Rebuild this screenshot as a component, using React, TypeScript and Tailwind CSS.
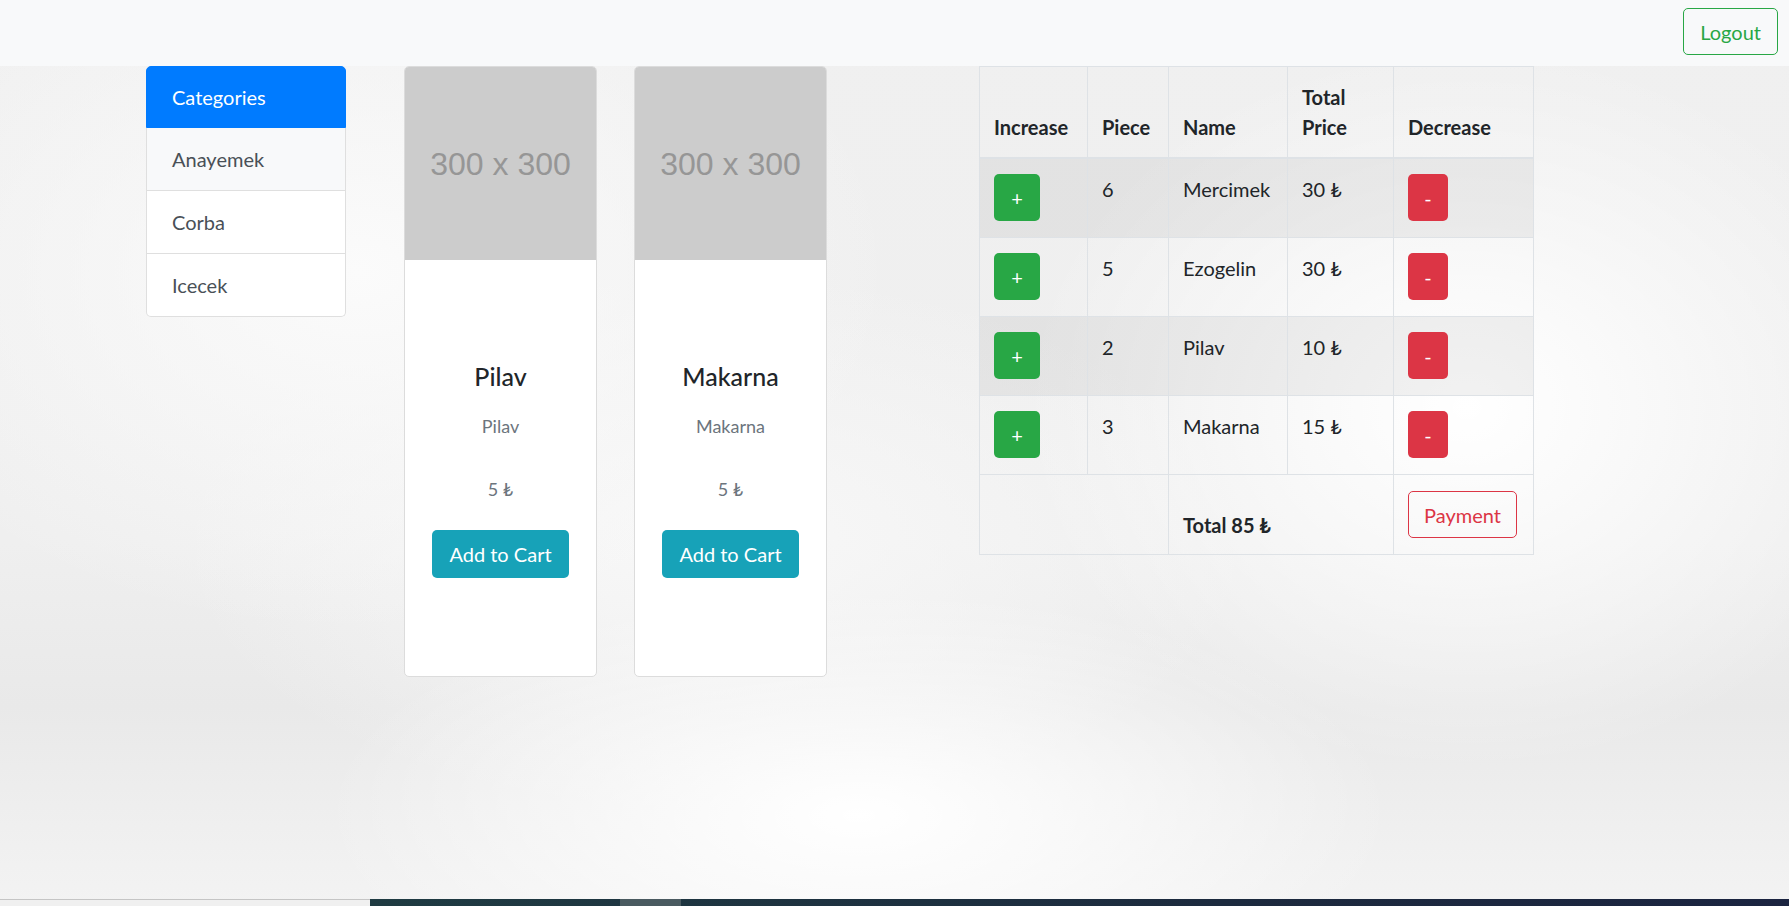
import React from "react";

const categories = ["Anayemek", "Corba", "Icecek"];

const products = [
  { name: "Pilav", desc: "Pilav", price: 5 },
  { name: "Makarna", desc: "Makarna", price: 5 },
];

const cart = [
  { piece: 6, name: "Mercimek", total: 30 },
  { piece: 5, name: "Ezogelin", total: 30 },
  { piece: 2, name: "Pilav", total: 10 },
  { piece: 3, name: "Makarna", total: 15 },
];

function ProductCard({ name, desc, price }: { name: string; desc: string; price: number }) {
  return (
    <div className="flex h-[611px] w-[193px] flex-col overflow-hidden rounded-[5px] border border-[#dcdcdc] bg-white">
      <div className="flex h-[193px] items-center justify-center bg-[#cccccc] font-['Liberation_Sans',Arial,sans-serif] text-[32px] text-[#969696]">
        300 x 300
      </div>
      <div className="flex flex-1 flex-col items-center justify-center pt-[2px]">
        <h5 className="text-[25px] font-medium leading-[30px] text-[#212529]">{name}</h5>
        <p className="mt-[22px] text-[18px] leading-[27px] text-[#6c757d]">{desc}</p>
        <p className="mt-[36px] text-[18px] leading-[27px] text-[#6c757d]">{price} ₺</p>
        <button className="mt-[27px] h-[48px] rounded-[5px] bg-[#17a2b8] px-[17px] text-[20px] text-white">
          Add to Cart
        </button>
      </div>
    </div>
  );
}

export default function App() {
  return (
    <div className="flex h-screen flex-col overflow-hidden font-['Lato','Noto_Sans',sans-serif] text-[#212529] bg-[radial-gradient(ellipse_30%_25%_at_48%_90%,#ffffff_0%,rgba(255,255,255,0)_100%),radial-gradient(ellipse_25%_40%_at_82%_45%,#ffffff_0%,rgba(255,255,255,0)_100%),radial-gradient(ellipse_30%_40%_at_20%_30%,#fbfbfb_0%,rgba(255,255,255,0)_100%),radial-gradient(ellipse_30%_30%_at_40%_60%,#f8f8f8_0%,rgba(255,255,255,0)_100%),linear-gradient(180deg,#f0f0f0_0%,#efefef_60%,#e9e9e9_78%,#f3f3f3_100%)]">
      {/* navbar */}
      <nav className="flex h-[66px] shrink-0 items-start justify-end bg-[#f8f9fa] pr-[11px] pt-[8px]">
        <button className="h-[47px] rounded-[5px] border border-[#28a745] px-[16px] text-[20px] text-[#28a745]">
          Logout
        </button>
      </nav>

      <main className="flex flex-1 items-start pl-[146px]">
        {/* categories */}
        <ul className="w-[200px] text-[20px]">
          <li className="flex h-[62px] items-center rounded-t-[5px] border border-[#007bff] bg-[#007bff] px-[25px] text-white">
            Categories
          </li>
          {categories.map((c, i) => (
            <li
              key={c}
              className={
                "flex h-[63px] items-center border-x border-b border-[#dfdfdf] px-[25px] text-[#495057] " +
                (i === 0 ? "bg-[#f8f9fa]" : "bg-white") +
                (i === categories.length - 1 ? " rounded-b-[5px]" : "")
              }
            >
              {c}
            </li>
          ))}
        </ul>

        {/* products */}
        <div className="ml-[58px] flex gap-[37px]">
          {products.map((p) => (
            <ProductCard key={p.name} {...p} />
          ))}
        </div>

        {/* cart */}
        <table className="ml-[152px] w-[554px] table-fixed border-collapse border border-[#dee2e6] text-[20px] leading-[30px]">
          <colgroup>
            <col className="w-[108px]" />
            <col className="w-[81px]" />
            <col className="w-[119px]" />
            <col className="w-[106px]" />
            <col className="w-[140px]" />
          </colgroup>
          <thead>
            <tr className="border-b-2 border-[#dee2e6]">
              {["Increase", "Piece", "Name", "Total Price", "Decrease"].map((h) => (
                <th
                  key={h}
                  className="border-x border-[#dee2e6] px-[14px] pb-[15px] pt-[15px] text-left align-bottom font-bold"
                >
                  {h}
                </th>
              ))}
            </tr>
          </thead>
          <tbody>
            {cart.map((row, i) => (
              <tr key={row.name} className={"border-t border-[#dee2e6] " + (i % 2 === 0 ? "bg-black/[0.05]" : "")}>
                <td className="border-x border-[#dee2e6] px-[14px] pb-[16px] pt-[15px] align-top">
                  <button className="h-[47px] w-[46px] rounded-[5px] bg-[#28a745] text-[20px] text-white">+</button>
                </td>
                <td className="border-x border-[#dee2e6] px-[14px] pb-[16px] pt-[15px] align-top">{row.piece}</td>
                <td className="border-x border-[#dee2e6] px-[14px] pb-[16px] pt-[15px] align-top">{row.name}</td>
                <td className="border-x border-[#dee2e6] px-[14px] pb-[16px] pt-[15px] align-top">{row.total} ₺</td>
                <td className="border-x border-[#dee2e6] px-[14px] pb-[16px] pt-[15px] align-top">
                  <button className="h-[47px] w-[40px] rounded-[5px] bg-[#dc3545] text-[20px] text-white">-</button>
                </td>
              </tr>
            ))}
            <tr className="border-t border-[#dee2e6]">
              <td colSpan={2} className="border-x border-[#dee2e6] px-[14px] pb-[16px] pt-[16px]"></td>
              <th colSpan={2} className="border-x border-[#dee2e6] px-[14px] pb-[14px] text-left align-bottom font-bold">
                Total 85 ₺
              </th>
              <td className="border-x border-[#dee2e6] px-[14px] pb-[16px] pt-[16px] align-top">
                <button className="h-[47px] rounded-[5px] border border-[#dc3545] px-[15px] text-[20px] text-[#dc3545]">
                  Payment
                </button>
              </td>
            </tr>
          </tbody>
        </table>
      </main>

      {/* bottom edge strip */}
      <div className="flex h-[7px] shrink-0">
        <div className="w-[370px] border-t border-[#c5c5c5] bg-[#f0f0f0]"></div>
        <div className="flex flex-1 bg-[linear-gradient(90deg,#1f3b42,#1c2a3e_60%,#1b2440)]">
          <div className="ml-[250px] w-[61px] bg-[#4a5a60]"></div>
        </div>
      </div>
    </div>
  );
}
